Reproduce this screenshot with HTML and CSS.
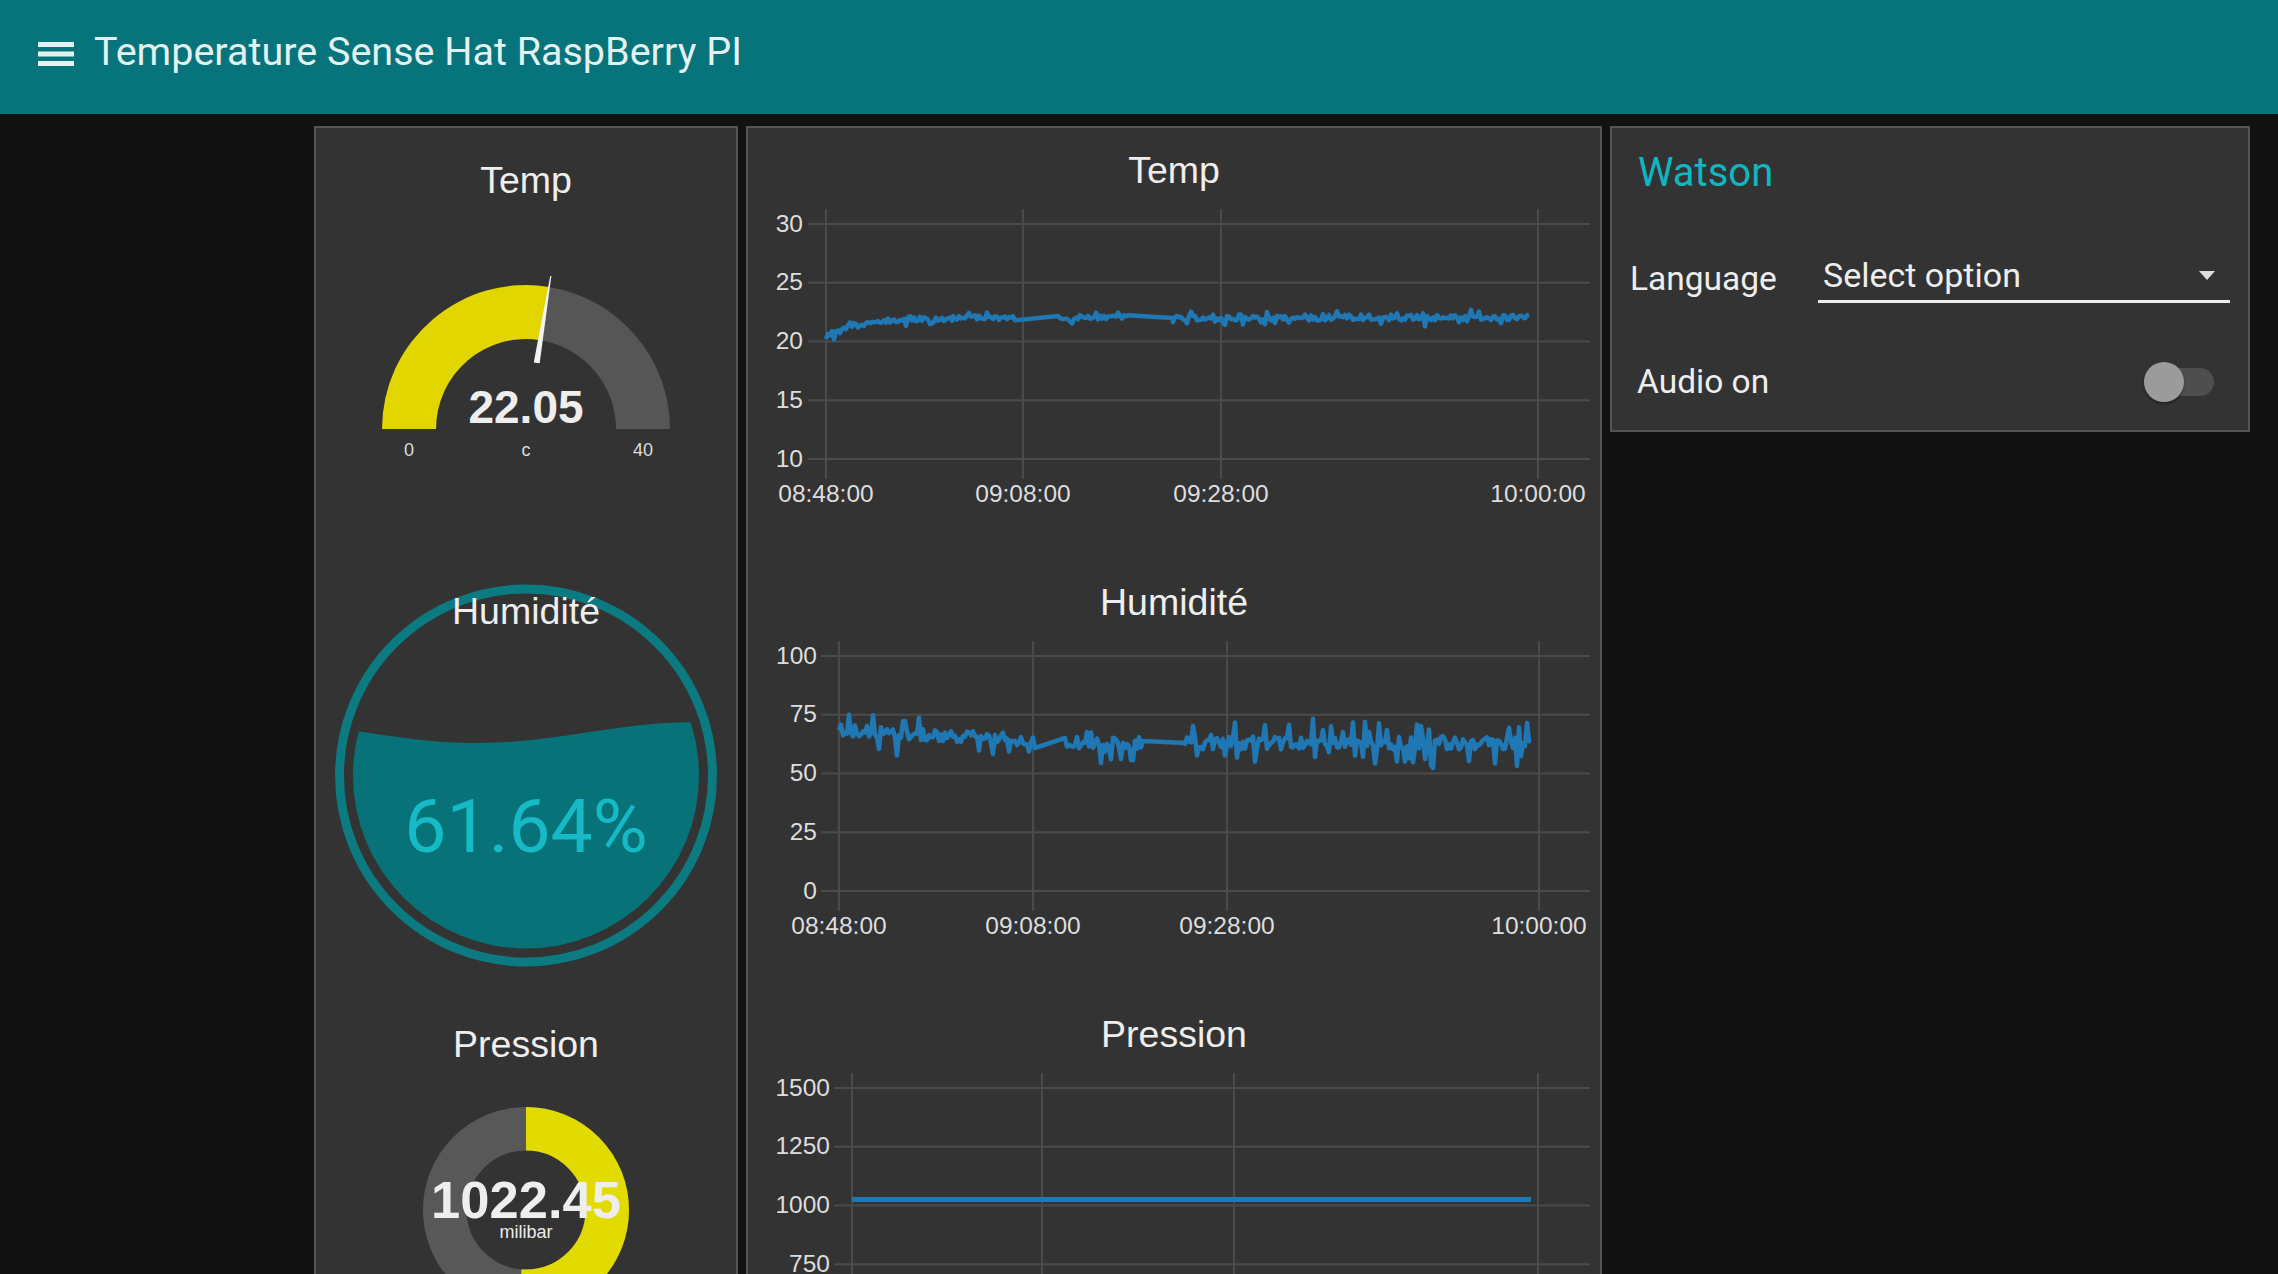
FILE: index.html
```html
<!DOCTYPE html>
<html lang="fr">
<head>
<meta charset="utf-8">
<title>Temperature Sense Hat RaspBerry PI</title>
<link rel="stylesheet" href="styles.css">
</head>
<body>
<header class="toolbar">
  <svg class="menu-icon" viewBox="0 0 36 24" aria-hidden="true">
    <rect x="0" y="0" width="36" height="5"/>
    <rect x="0" y="9.5" width="36" height="5"/>
    <rect x="0" y="19" width="36" height="5"/>
  </svg>
  <h1 class="app-title">Temperature Sense Hat RaspBerry PI</h1>
</header>

<main class="dashboard">
  <!-- Left column: gauges -->
  <section class="card card-gauges">
    <div class="widget">
      <h2 class="w-title">Temp</h2>
      <svg class="gauge" width="420" height="300" viewBox="0 0 420 300">
        <path class="arc-bg" d="M233.0,86.9 A144,144 0 0 1 354,229 L300,229 A90,90 0 0 0 224.4,140.2 Z"/>
        <path class="arc-val" d="M66,229 A144,144 0 0 1 233.0,86.9 L224.4,140.2 A90,90 0 0 0 120,229 Z"/>
        <polygon class="needle" points="207,162 213,162 210.6,74 209.4,74" transform="rotate(9.2 210 229)"/>
        <text class="g-value" x="210" y="223">22.05</text>
        <text class="g-lab" x="93" y="256">0</text>
        <text class="g-lab" x="210" y="256">c</text>
        <text class="g-lab" x="327" y="256">40</text>
      </svg>
    </div>

    <div class="widget widget-liquid">
      <h2 class="w-title">Humidité</h2>
      <svg class="liquid" width="420" height="432" viewBox="0 0 420 432">
        <defs>
          <clipPath id="liquid-clip"><circle cx="210" cy="215.5" r="173"/></clipPath>
        </defs>
        <circle class="liquid-ring" cx="210" cy="215.5" r="186.5"/>
        <path class="liquid-fill" clip-path="url(#liquid-clip)" d="M-59,162 C21,162 81,183 161,183 C241,183 301,162 381,162 C421,162 440,166 440,166 L440,432 L-59,432 Z"/>
        <text class="liquid-text" x="210" y="292">61.64%</text>
      </svg>
    </div>

    <div class="widget">
      <h2 class="w-title">Pression</h2>
      <svg class="donut" width="420" height="360" viewBox="0 0 420 360">
        <circle class="donut-bg" cx="210" cy="146" r="81.25"/>
        <circle class="donut-val" cx="210" cy="146" r="81.25" stroke-dasharray="261 600" transform="rotate(-90 210 146)"/>
        <text class="d-value" x="210" y="154">1022.45</text>
        <text class="d-unit" x="210" y="174">milibar</text>
      </svg>
    </div>
  </section>

  <!-- Middle column: charts -->
  <section class="card card-charts">
    <div class="chart">
      <h2 class="w-title">Temp</h2>
      <svg class="plot" width="852" height="360" viewBox="0 0 852 360">
        <g class="grid">
          <line x1="60" y1="24" x2="842" y2="24"/>
          <line x1="60" y1="82.75" x2="842" y2="82.75"/>
          <line x1="60" y1="141.5" x2="842" y2="141.5"/>
          <line x1="60" y1="200.25" x2="842" y2="200.25"/>
          <line x1="60" y1="259" x2="842" y2="259"/>
          <line x1="78" y1="9" x2="78" y2="279"/>
          <line x1="275" y1="9" x2="275" y2="279"/>
          <line x1="473" y1="9" x2="473" y2="279"/>
          <line x1="790" y1="9" x2="790" y2="279"/>
        </g>
        <g class="ylab">
          <text x="55" y="31.6">30</text>
          <text x="55" y="90.4">25</text>
          <text x="55" y="149.1">20</text>
          <text x="55" y="207.9">15</text>
          <text x="55" y="266.6">10</text>
        </g>
        <g class="xlab">
          <text x="78" y="302">08:48:00</text>
          <text x="275" y="302">09:08:00</text>
          <text x="473" y="302">09:28:00</text>
          <text x="790" y="302">10:00:00</text>
        </g>
        <polyline id="temp-line" class="series" points="78,136 782,118"/>
      </svg>
    </div>

    <div class="chart">
      <h2 class="w-title">Humidité</h2>
      <svg class="plot" width="852" height="360" viewBox="0 0 852 360">
        <g class="grid">
          <line x1="73" y1="24" x2="842" y2="24"/>
          <line x1="73" y1="82.75" x2="842" y2="82.75"/>
          <line x1="73" y1="141.5" x2="842" y2="141.5"/>
          <line x1="73" y1="200.25" x2="842" y2="200.25"/>
          <line x1="73" y1="259" x2="842" y2="259"/>
          <line x1="91" y1="9" x2="91" y2="279"/>
          <line x1="285" y1="9" x2="285" y2="279"/>
          <line x1="479" y1="9" x2="479" y2="279"/>
          <line x1="791" y1="9" x2="791" y2="279"/>
        </g>
        <g class="ylab">
          <text x="69" y="31.6">100</text>
          <text x="69" y="90.4">75</text>
          <text x="69" y="149.1">50</text>
          <text x="69" y="207.9">25</text>
          <text x="69" y="266.6">0</text>
        </g>
        <g class="xlab">
          <text x="91" y="302">08:48:00</text>
          <text x="285" y="302">09:08:00</text>
          <text x="479" y="302">09:28:00</text>
          <text x="791" y="302">10:00:00</text>
        </g>
        <polyline id="hum-line" class="series" points="91,99 784,111"/>
      </svg>
    </div>

    <div class="chart">
      <h2 class="w-title">Pression</h2>
      <svg class="plot" width="852" height="360" viewBox="0 0 852 360">
        <g class="grid">
          <line x1="86" y1="24" x2="842" y2="24"/>
          <line x1="86" y1="82.75" x2="842" y2="82.75"/>
          <line x1="86" y1="141.5" x2="842" y2="141.5"/>
          <line x1="86" y1="200.25" x2="842" y2="200.25"/>
          <line x1="86" y1="259" x2="842" y2="259"/>
          <line x1="104" y1="9" x2="104" y2="279"/>
          <line x1="294" y1="9" x2="294" y2="279"/>
          <line x1="486" y1="9" x2="486" y2="279"/>
          <line x1="790" y1="9" x2="790" y2="279"/>
        </g>
        <g class="ylab">
          <text x="82" y="31.6">1500</text>
          <text x="82" y="90.4">1250</text>
          <text x="82" y="149.1">1000</text>
          <text x="82" y="207.9">750</text>
          <text x="82" y="266.6">500</text>
        </g>
        <g class="xlab">
          <text x="104" y="302">08:48:00</text>
          <text x="294" y="302">09:08:00</text>
          <text x="486" y="302">09:28:00</text>
          <text x="790" y="302">10:00:00</text>
        </g>
        <line class="series series-flat" x1="104" y1="135.5" x2="783" y2="135.5"/>
      </svg>
    </div>
  </section>

  <!-- Right column: Watson -->
  <section class="card card-watson">
    <h2 class="watson-title">Watson</h2>
    <div class="form-row row-language">
      <span class="field-label">Language</span>
      <div class="select">
        <span class="select-text">Select option</span>
        <span class="caret"></span>
      </div>
    </div>
    <div class="form-row row-audio">
      <span class="field-label">Audio on</span>
      <div class="toggle">
        <span class="toggle-track"></span>
        <span class="toggle-thumb"></span>
      </div>
    </div>
  </section>
</main>
<script src="script.js"></script>
</body>
</html>
```

FILE: styles.css
```css
* { box-sizing: border-box; }

html, body {
  margin: 0;
  height: 100%;
}

body {
  background: #111111;
  overflow: hidden;
  font-family: "Liberation Sans", Arial, sans-serif;
  color: #eeeeee;
}

/* Header */
.toolbar {
  height: 114px;
  background: #06747a;
  display: flex;
  align-items: flex-start;
  padding-left: 38px;
}

.menu-icon {
  flex: none;
  width: 36px;
  height: 24px;
  margin-top: 42px;
  fill: #e4f1f1;
}

.app-title {
  margin: 29px 0 0 20px;
  font: 400 39.5px/46px Roboto, "Liberation Sans", sans-serif;
  color: #e4f1f1;
  white-space: nowrap;
}

/* Layout */
.dashboard {
  display: flex;
  align-items: flex-start;
  gap: 8px;
  padding: 12px 0 0 314px;
}

.card {
  flex: none;
  background: #333333;
  border: 2px solid #555555;
}

.card-gauges { width: 424px; }
.card-charts { width: 856px; }
.card-watson { width: 640px; }

/* Widgets */
.widget,
.chart {
  height: 432px;
  display: flex;
  flex-direction: column;
  align-items: center;
}

.w-title {
  margin: 32px 0 0;
  font: 400 37.5px/40px "Liberation Sans", Arial, sans-serif;
  color: #eeeeee;
  white-space: nowrap;
}

.gauge, .liquid, .donut, .plot { display: block; flex: none; }

/* Gauge */
.arc-bg { fill: #565656; }
.arc-val { fill: #e1d600; }
.needle { fill: #f2f2f2; }
.g-value {
  font: 700 46px "Liberation Sans", Arial, sans-serif;
  fill: #eeeeee;
  text-anchor: middle;
}
.g-lab {
  font: 400 18px "Liberation Sans", Arial, sans-serif;
  fill: #dddddd;
  text-anchor: middle;
}

/* Liquid gauge */
.widget-liquid { display: grid; }
.widget-liquid > * { grid-area: 1 / 1; }
.widget-liquid .w-title {
  z-index: 1;
  justify-self: center;
  align-self: start;
  margin-top: 31px;
}
.liquid-ring { fill: none; stroke: #0b7b81; stroke-width: 9; }
.liquid-fill { fill: #077379; }
.liquid-text {
  font: 400 75px Roboto, "Liberation Sans", sans-serif;
  fill: #16b9c6;
  text-anchor: middle;
}

/* Donut */
.donut-bg { fill: none; stroke: #585858; stroke-width: 43.5; }
.donut-val { fill: none; stroke: #e2db00; stroke-width: 43.5; }
.d-value {
  font: 700 52.5px "Liberation Sans", Arial, sans-serif;
  fill: #eeeeee;
  text-anchor: middle;
}
.d-unit {
  font: 400 18px "Liberation Sans", Arial, sans-serif;
  fill: #eeeeee;
  text-anchor: middle;
}

/* Charts */
.chart .w-title { margin-top: 22px; }
.plot { margin-top: 10px; }
.grid line { stroke: #4b4b4b; stroke-width: 2; }
.ylab text {
  font: 400 24.5px "Liberation Sans", Arial, sans-serif;
  fill: #dddddd;
  text-anchor: end;
}
.xlab text {
  font: 400 24.5px "Liberation Sans", Arial, sans-serif;
  fill: #dddddd;
  text-anchor: middle;
}
.series {
  fill: none;
  stroke: #1f77b4;
  stroke-width: 4.5;
  stroke-linejoin: round;
}
.series-flat { stroke-width: 5; }

/* Watson */
.watson-title {
  margin: 23px 0 0 26px;
  font: 400 40px/44px Roboto, "Liberation Sans", sans-serif;
  color: #0eb8c0;
}

.form-row {
  display: flex;
  align-items: center;
  justify-content: space-between;
}

.field-label {
  font: 400 33.5px/40px Roboto, "Liberation Sans", sans-serif;
  color: #eeeeee;
  white-space: nowrap;
}

.row-language {
  margin-top: 60px;
  padding: 0 18px;
}

.select {
  width: 412px;
  display: flex;
  align-items: center;
  justify-content: space-between;
  padding: 0 15px 5px 5px;
  border-bottom: 3px solid #eeeeee;
}

.select-text {
  font: 400 34px/40px Roboto, "Liberation Sans", sans-serif;
  color: #eeeeee;
  white-space: nowrap;
}

.caret {
  width: 0;
  height: 0;
  border-left: 8.5px solid transparent;
  border-right: 8.5px solid transparent;
  border-top: 9px solid #dddddd;
}

.row-audio {
  margin-top: 59px;
  padding: 0 34px 28px 25px;
}

.toggle {
  width: 70px;
  height: 40px;
  display: grid;
  align-items: center;
}

.toggle > * { grid-area: 1 / 1; }

.toggle-track {
  height: 28px;
  border-radius: 14px;
  background: #4e4e4e;
}

.toggle-thumb {
  width: 40px;
  height: 40px;
  border-radius: 50%;
  background: #9b9b9b;
  box-shadow: 0 2px 3px rgba(0, 0, 0, 0.35);
}
```

FILE: script.js
```js
(function () {
  function rng(seed) {
    var s = seed >>> 0;
    return function () {
      s = (Math.imul(s, 1664525) + 1013904223) >>> 0;
      return s / 4294967296;
    };
  }

  var series = {
    'temp-line': {
      seed: 12345,
      step: 2,
      segs: [
        { x0: 78, x1: 205, y0: 137, y1: 118, curve: true, noise: 2.8, sp: 0.12, amp: 6 },
        { x0: 205, x1: 268, y0: 118, y1: 118, noise: 2.4, sp: 0.14, amp: 6 },
        { x1: 310, y1: 116 },
        { x0: 310, x1: 380, y0: 117, y1: 117, noise: 2.8, sp: 0.14, amp: 6 },
        { x1: 425, y1: 118 },
        { x0: 425, x1: 782, y0: 117.5, y1: 117.5, noise: 3, sp: 0.14, amp: 7 }
      ]
    },
    'hum-line': {
      seed: 98765,
      step: 2,
      segs: [
        { x0: 91, x1: 285, y0: 98, y1: 108, noise: 6, sp: 0.22, amp: 20 },
        { x1: 287, y1: 116 },
        { x1: 317, y1: 106 },
        { x0: 319, x1: 396, y0: 111, y1: 111, noise: 6, sp: 0.22, amp: 20 },
        { x1: 437, y1: 111 },
        { x0: 437, x1: 784, y0: 111, y1: 111, noise: 6.5, sp: 0.24, amp: 22 }
      ]
    }
  };

  Object.keys(series).forEach(function (id) {
    var el = document.getElementById(id);
    if (!el) return;
    var cfg = series[id];
    var r = rng(cfg.seed);
    var pts = [];
    cfg.segs.forEach(function (sg) {
      if (sg.noise === undefined) {
        pts.push([sg.x1, sg.y1]);
        return;
      }
      for (var x = sg.x0; x <= sg.x1; x += cfg.step) {
        var t = (x - sg.x0) / (sg.x1 - sg.x0);
        var base = sg.curve
          ? sg.y1 + (sg.y0 - sg.y1) * Math.exp(-4 * t)
          : sg.y0 + (sg.y1 - sg.y0) * t;
        var y = base + (r() - 0.5) * 2 * sg.noise;
        if (r() < sg.sp) {
          y += (r() < 0.5 ? -1 : 1) * sg.amp * (0.4 + 0.6 * r());
        }
        pts.push([x, y]);
      }
    });
    el.setAttribute('points', pts.map(function (p) {
      return p[0].toFixed(1) + ',' + p[1].toFixed(1);
    }).join(' '));
  });
})();
```
